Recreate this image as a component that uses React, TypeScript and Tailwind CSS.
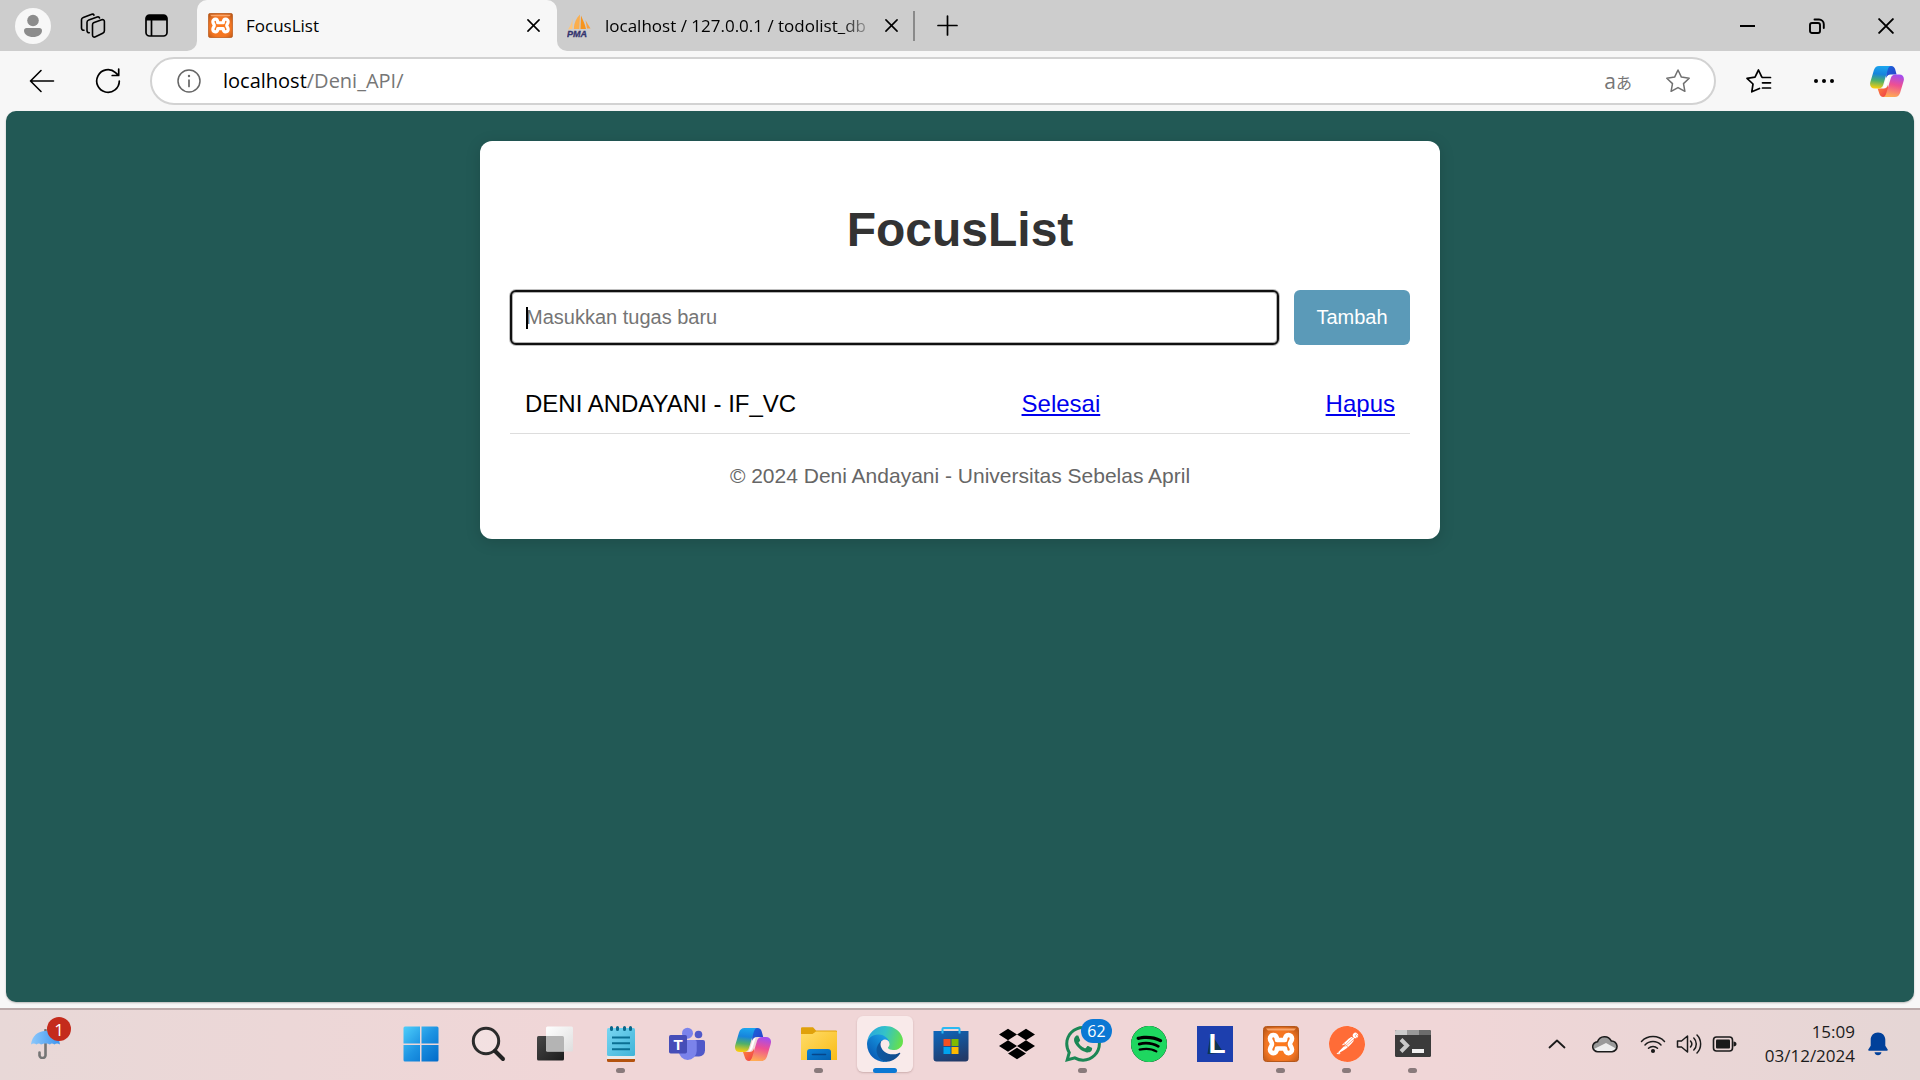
import React from "react";
import { SiSpotify, SiDropbox, SiPostman, SiWhatsapp } from "react-icons/si";

const iconLine = {
  fill: "none",
  stroke: "currentColor",
  strokeLinecap: "round" as const,
  strokeLinejoin: "round" as const,
};

function XamppIcon({ size }: { size: number }) {
  return (
    <svg width={size} height={size} viewBox="0 0 36 36" aria-hidden="true">
      <defs>
        <radialGradient id="xamppFill" cx="0.5" cy="0.55" r="0.65">
          <stop offset="0" stopColor="#ff7a1c" />
          <stop offset="0.65" stopColor="#f37623" />
          <stop offset="1" stopColor="#c05a18" />
        </radialGradient>
      </defs>
      <rect x="0.5" y="0.5" width="35" height="35" rx="3" fill="url(#xamppFill)" stroke="#b4581c" />
      <path d="M3 2.500h30l-2 2H5z" fill="#f9a56a" />
      <path
        d="M14 14C14 7 7 8 7 12.500C7 15 9 16 9 18C9 20 7 21 7 23.500C7 28 14 29 14 22.500H22C22 29 29 28 29 23.500C29 21 27 20 27 18C27 16 29 15 29 12.500C29 8 22 7 22 14Z"
        fill="none"
        stroke="#fff"
        strokeWidth="4.600"
        strokeLinecap="round"
        strokeLinejoin="round"
      />
    </svg>
  );
}

function CopilotIcon({ className }: { className: string }) {
  return (
    <svg className={className} viewBox="0 0 36 33" aria-hidden="true">
      <defs>
        <linearGradient id="cpA" x1="0.4" y1="0" x2="0.3" y2="1">
          <stop offset="0" stopColor="#1ba5ee" />
          <stop offset="0.35" stopColor="#1784dc" />
          <stop offset="0.65" stopColor="#4fb06a" />
          <stop offset="1" stopColor="#ffcf0a" />
        </linearGradient>
        <linearGradient id="cpB" x1="0.6" y1="0" x2="0.4" y2="1">
          <stop offset="0" stopColor="#a34df0" />
          <stop offset="0.45" stopColor="#ee4f93" />
          <stop offset="1" stopColor="#ffac53" />
        </linearGradient>
        <linearGradient id="cpC" x1="0" y1="0" x2="1" y2="1">
          <stop offset="0" stopColor="#1a66dc" />
          <stop offset="1" stopColor="#2a3fc8" />
        </linearGradient>
        <linearGradient id="cpD" x1="0" y1="0" x2="1" y2="1">
          <stop offset="0" stopColor="#ff8a3a" />
          <stop offset="1" stopColor="#ee3b4a" />
        </linearGradient>
      </defs>
      <path d="M17 0h5.500c2.300 0 3.600 1.400 4.200 3.500L28.200 9H22c-2.500 0-4 1.500-4.800 4z" fill="url(#cpC)" />
      <path d="M8 24h6.500c2.500 0 4-1.500 4.600-4L19 33h-5c-2.300 0-3.500-1.500-4.100-3.500z" fill="url(#cpD)" />
      <path d="M9.500 0H22.500c-2 0-3 1.500-3.800 4.200L14 20c-.9 2.800-2.400 4-5 4H5c-4 0-5.800-3-4.700-7L4 4.500C5 1.500 6.700 0 9.500 0z" fill="url(#cpA)" />
      <path d="M26.500 33H13.500c2 0 3-1.500 3.800-4.200L22 13c.9-2.800 2.400-4 5-4h4c4 0 5.800 3 4.700 7L32 28.500c-1 3-2.700 4.500-5.500 4.500z" fill="url(#cpB)" />
      <path d="M20.800 9.500c-2 .6-3 2-3.600 3.800L15 20.500c-.4 1.400-1 2.400-1.800 3.100 2.500-.2 3.800-1.600 4.500-4z" fill="#fff" />
    </svg>
  );
}

function PmaIcon() {
  return (
    <svg width="24" height="24" viewBox="0 0 24 24" aria-hidden="true">
      <path d="M1 15.500C3.500 12 5 8 5.500 4L5.500 15z" fill="#fcc67e" />
      <path d="M6.800 15C7 9 9 4.500 13 0.500L12.300 15z" fill="#fbae4c" />
      <path d="M14 1.500c1.500 4 4 8 5 13.500h-5.500z" fill="#f7941d" />
      <path d="M18.500 6c1.500 3 3.500 6 5 8.500h-3.500z" fill="#f9a03f" />
      <text x="0" y="23" fontFamily="Liberation Sans, Arial, sans-serif" fontSize="9" fontWeight="700" fontStyle="italic" fill="#34346e" stroke="#34346e" strokeWidth="0.3">
        PMA
      </text>
    </svg>
  );
}

function CloseGlyph({ size }: { size: number }) {
  return (
    <svg width={size} height={size} viewBox="0 0 14 14" aria-hidden="true" {...iconLine} strokeWidth="1.700">
      <path d="M1 1l12 12M13 1L1 13" />
    </svg>
  );
}

function TitleBar() {
  return (
    <header className="flex h-[51px] bg-[#f7f7f7] text-black">
      <div className="flex w-[197px] shrink-0 items-center rounded-br-[10px] bg-[#cdcdcd] pl-[15px]">
        <button type="button" aria-label="Profile" className="flex size-9 items-center justify-center rounded-full bg-[#f7f7f7]">
          <svg width="20" height="24" viewBox="0 0 20 24" fill="#8c8c8c" aria-hidden="true">
            <circle cx="10" cy="6.500" r="5.800" />
            <path d="M3.500 14h13c1.300 0 2.500 1 2.500 2.500 0 4-4 6.500-9 6.500s-9-2.500-9-6.500C1 15 2.200 14 3.500 14z" />
          </svg>
        </button>
        <button type="button" aria-label="Workspaces" className="ml-[29px]">
          <svg width="26" height="26" viewBox="0 0 26 26" aria-hidden="true" {...iconLine} strokeWidth="1.600">
            <path d="M13.500 9.800l8.200-3c1.500-.5 2.700.2 2.700 1.800v9.200c0 1.200-.6 2-1.700 2.500l-7.200 3.500c-1.700.8-3-.1-3-1.700V12c0-1.100.3-1.800 1-2.200z" />
            <path d="M19.500 4.900c-.3-1-1.200-1.300-2.300-.9L8.800 7C7.700 7.400 7 8.200 7 9.300v8.200c0 1.500.9 2.300 2.300 2.300" />
            <path d="M14 2.100c-.4-.9-1.200-1.200-2.200-.8L3.300 4.500C2.200 4.900 1.500 5.700 1.500 6.800V15c0 1.500 1 2.300 2.500 2.300" />
          </svg>
        </button>
        <button type="button" aria-label="Tab actions" className="ml-[39px]">
          <svg width="23" height="23" viewBox="0 0 23 23" aria-hidden="true">
            <rect x="1" y="1" width="21" height="21" rx="3.500" fill="none" stroke="#000" strokeWidth="1.700" />
            <path d="M1 6.500V4.500A3.500 3.500 0 0 1 4.500 1h14A3.500 3.500 0 0 1 22 4.500v2z" fill="#000" />
            <path d="M6.500 6v16" stroke="#000" strokeWidth="1.700" />
          </svg>
        </button>
      </div>

      <div className="w-[360px] shrink-0 bg-[#cdcdcd]">
        <div className="flex h-full items-center rounded-t-[10px] bg-[#f7f7f7] pr-[17px] pl-[11px]">
          <XamppIcon size={25} />
          <span className="ml-[13px] flex-1 text-[17px]">FocusList</span>
          <button type="button" aria-label="Close tab">
            <CloseGlyph size={13} />
          </button>
        </div>
      </div>

      <div className="flex min-w-0 flex-1 items-center rounded-bl-[10px] bg-[#cdcdcd] pl-2.5">
        <PmaIcon />
        <span className="ml-3.5 w-[264px] overflow-hidden text-[17px] whitespace-nowrap [mask-image:linear-gradient(to_right,#000_236px,transparent_270px)]">
          localhost / 127.0.0.1 / todolist_db
        </span>
        <button type="button" aria-label="Close tab" className="ml-4">
          <CloseGlyph size={13} />
        </button>
        <span className="ml-[15px] h-[30px] w-0.5 bg-[#8a8a8a]" />
        <button type="button" aria-label="New tab" className="ml-[22px]">
          <svg width="21" height="21" viewBox="0 0 21 21" aria-hidden="true" {...iconLine} strokeWidth="1.700">
            <path d="M10.500 1v19M1 10.500h19" />
          </svg>
        </button>
        <div className="ml-auto flex">
          <button type="button" aria-label="Minimize" className="flex h-12 w-[69px] items-center justify-center">
            <span className="h-0.5 w-[15px] bg-black" />
          </button>
          <button type="button" aria-label="Restore" className="flex h-12 w-[69px] items-center justify-center">
            <svg width="16" height="16" viewBox="0 0 16 16" aria-hidden="true" {...iconLine} strokeWidth="1.900">
              <rect x="1" y="5" width="10" height="10" rx="2" />
              <path d="M5.500 1.500H10a4.800 4.800 0 0 1 4.800 4.800V10" />
            </svg>
          </button>
          <button type="button" aria-label="Close" className="flex h-12 w-[69px] items-center justify-center">
            <CloseGlyph size={16} />
          </button>
        </div>
      </div>
    </header>
  );
}

function Toolbar() {
  return (
    <nav className="flex h-[60px] items-center bg-[#f7f7f7] pr-4 pl-7 text-black" aria-label="Browser toolbar">
      <button type="button" aria-label="Back">
        <svg width="28" height="26" viewBox="0 0 28 26" aria-hidden="true" {...iconLine} strokeWidth="1.600">
          <path d="M25.500 13H2.500M13 2.500L2.500 13 13 23.500" />
        </svg>
      </button>
      <button type="button" aria-label="Refresh" className="ml-[39px]">
        <svg width="26" height="26" viewBox="0 0 26 26" aria-hidden="true" {...iconLine} strokeWidth="1.700">
          <path d="M24.300 13A11.300 11.300 0 1 1 20.500 4.600L23.500 7.300M23.700 1v6.500h-6.500" />
        </svg>
      </button>
      <div className="ml-[29px] flex h-12 min-w-0 flex-1 items-center rounded-full border-2 border-[#d2d2d2] bg-white pr-[23px] pl-6">
        <svg width="26" height="26" viewBox="0 0 26 26" aria-hidden="true" {...iconLine} stroke="#666" strokeWidth="1.500">
          <circle cx="13" cy="13" r="11" />
          <path d="M13 12v6.500" strokeWidth="1.700" />
          <circle cx="13" cy="8" r="0.500" strokeWidth="1.400" />
        </svg>
        <div className="ml-[21px] flex-1 text-xl text-[#767676]">
          <span className="text-black">localhost</span>/Deni_API/
        </div>
        <button type="button" aria-label="Translate page" className="flex items-baseline text-[#767676]">
          <span className="text-[21px] leading-6">a</span>
          <span className="font-['Noto_Sans_CJK_JP',sans-serif] text-base leading-6">あ</span>
        </button>
        <button type="button" aria-label="Add to favorites" className="ml-[33px] text-[#707070]">
          <svg width="26" height="26" viewBox="0 0 26 26" aria-hidden="true" {...iconLine} strokeWidth="1.500">
            <path d="M13 2l3.400 7.100 7.800 1.100-5.700 5.400 1.400 7.700L13 19.600l-6.900 3.700 1.400-7.700-5.700-5.400 7.800-1.100z" />
          </svg>
        </button>
      </div>
      <button type="button" aria-label="Favorites" className="ml-[29px]">
        <svg width="27" height="26" viewBox="0 0 27 26" aria-hidden="true" {...iconLine} strokeWidth="1.700">
          <path d="M14.500 20.500L6.800 23.800 8 16 2 10.300l8-1.200L13.500 2l3.200 6.800M17.500 9.500H25.500M17.500 14.800H25.500M17.500 20H25.500" />
        </svg>
      </button>
      <button type="button" aria-label="Settings and more" className="ml-[41px]">
        <svg width="22" height="6" viewBox="0 0 22 6" aria-hidden="true">
          <circle cx="3" cy="3" r="2" />
          <circle cx="11" cy="3" r="2" />
          <circle cx="19" cy="3" r="2" />
        </svg>
      </button>
      <button type="button" aria-label="Copilot" className="ml-[35px]">
        <CopilotIcon className="h-[31px] w-[34px]" />
      </button>
    </nav>
  );
}

function TodoCard() {
  return (
    <section className="mx-auto w-full max-w-[960px] rounded-xl bg-white p-[30px] font-['Liberation_Sans',Arial,sans-serif] shadow-[0_3px_15px_rgba(0,0,0,0.15)]">
      <h1 className="mt-8 mb-[34px] text-center text-[48px] leading-[53px] font-bold text-[#333]">FocusList</h1>
      <form className="flex gap-[15px]" onSubmit={(e) => e.preventDefault()}>
        <div className="relative min-w-0 flex-1">
          <input
            type="text"
            aria-label="Tugas baru"
            placeholder="Masukkan tugas baru"
            className="h-[55px] w-full rounded-md border-2 border-[#101010] bg-white px-3.5 text-xl text-black shadow-[0_0_0_1px_rgba(0,0,0,0.25),inset_0_0_0_1px_rgba(0,0,0,0.3)] outline-none placeholder:text-[#757575]"
          />
          <span className="absolute top-[17px] left-4 h-[22px] w-0.5 bg-black" />
        </div>
        <button type="submit" className="h-[55px] w-[116px] rounded-md bg-[#5b9ab8] pb-0.5 text-xl text-white">
          Tambah
        </button>
      </form>
      <ul className="mt-[30px]">
        <li className="flex justify-between border-b border-[#ddd] p-[15px] text-2xl leading-7 text-black">
          <span>DENI ANDAYANI - IF_VC</span>
          <a href="#selesai" className="text-[#0000ee] underline">
            Selesai
          </a>
          <a href="#hapus" className="text-[#0000ee] underline">
            Hapus
          </a>
        </li>
      </ul>
      <footer className="mt-[30px] mb-[21px] text-center text-[21px] leading-6 text-[#666]">
        © 2024 Deni Andayani - Universitas Sebelas April
      </footer>
    </section>
  );
}

function WindowsIcon() {
  return (
    <svg width="36" height="36" viewBox="0 0 36 36" aria-hidden="true">
      <defs>
        <linearGradient id="winFill" gradientUnits="userSpaceOnUse" x1="0" y1="0" x2="36" y2="36">
          <stop offset="0" stopColor="#4fd0fb" />
          <stop offset="0.500" stopColor="#1d93e2" />
          <stop offset="1" stopColor="#0069c8" />
        </linearGradient>
      </defs>
      <path d="M2 .5h15v17H.5V2A1.500 1.500 0 0 1 2 .5zM18.500.5H34A1.500 1.500 0 0 1 35.500 2v15.500h-17zM.5 19H17v16.500H2A1.500 1.500 0 0 1 .5 34zM18.500 19h17v15a1.500 1.500 0 0 1-1.500 1.500H18.500z" fill="url(#winFill)" />
    </svg>
  );
}

function SearchIcon() {
  return (
    <svg width="36" height="36" viewBox="0 0 36 36" aria-hidden="true">
      <circle cx="15" cy="15" r="12.700" fill="rgba(255,255,255,0.25)" stroke="#2b2b2b" strokeWidth="3" />
      <path d="M24 25l8 8" stroke="#222" strokeWidth="4" strokeLinecap="round" />
    </svg>
  );
}

function TaskViewIcon() {
  return (
    <svg width="36" height="36" viewBox="0 0 36 36" aria-hidden="true">
      <defs>
        <linearGradient id="tvDark" x1="0" y1="0" x2="1" y2="1">
          <stop offset="0" stopColor="#474747" />
          <stop offset="1" stopColor="#1c1c1c" />
        </linearGradient>
        <linearGradient id="tvLight" x1="0" y1="0" x2="1" y2="1">
          <stop offset="0" stopColor="#fff" />
          <stop offset="1" stopColor="#dedede" />
        </linearGradient>
      </defs>
      <rect x="0" y="10" width="27" height="24.500" rx="1.500" fill="url(#tvDark)" />
      <rect x="9" y="0.500" width="27" height="25" rx="1.500" fill="url(#tvLight)" />
      <path d="M9 10h16.500a1.500 1.500 0 0 1 1.500 1.500v14H10.500A1.500 1.500 0 0 1 9 24z" fill="#b4b4b4" />
    </svg>
  );
}

function NotepadIcon() {
  return (
    <svg width="36" height="36" viewBox="0 0 36 36" aria-hidden="true">
      <defs>
        <linearGradient id="npFill" x1="0" y1="0" x2="1" y2="1">
          <stop offset="0" stopColor="#79d6f2" />
          <stop offset="1" stopColor="#3fb4d8" />
        </linearGradient>
      </defs>
      <rect x="4" y="28" width="28" height="8" rx="1.500" fill="#b4530f" />
      <rect x="4" y="27" width="28" height="6" fill="#e9e9e9" />
      <rect x="4" y="2" width="28" height="28" rx="1.500" fill="url(#npFill)" />
      <path d="M9 11.500h18M9 17.300h18M9 23.200h18" stroke="#0a6f93" strokeWidth="2" />
      <path d="M8.500 1.500v2M14.500 1.500v2M21.500 1.500v2M27.500 1.500v2" stroke="#0a6789" strokeWidth="3" strokeLinecap="round" />
    </svg>
  );
}

function TeamsIcon() {
  return (
    <svg width="36" height="36" viewBox="0 0 36 36" aria-hidden="true">
      <circle cx="29.500" cy="8.500" r="3.800" fill="#5059c9" />
      <path d="M23 14h11a2 2 0 0 1 2 2v8.500a6 6 0 0 1-6 6h-7z" fill="#5059c9" />
      <circle cx="18.500" cy="7.200" r="5.500" fill="#7b83eb" />
      <path d="M10 14h16a1.700 1.700 0 0 1 1.700 1.700V25a9 9 0 0 1-9 9 9 9 0 0 1-9-9z" fill="#7b83eb" />
      <rect x="0" y="9" width="18" height="18.500" rx="1.700" fill="#464eb8" />
      <text x="9" y="24" textAnchor="middle" fontFamily="Liberation Sans, Arial, sans-serif" fontSize="15" fontWeight="700" fill="#fff">
        T
      </text>
    </svg>
  );
}

function FolderIcon() {
  return (
    <svg width="36" height="36" viewBox="0 0 36 36" aria-hidden="true">
      <defs>
        <linearGradient id="fdFill" x1="0" y1="0" x2="1" y2="1">
          <stop offset="0" stopColor="#ffdc6a" />
          <stop offset="1" stopColor="#f9bc16" />
        </linearGradient>
        <linearGradient id="fdClip" x1="0" y1="0" x2="1" y2="1">
          <stop offset="0" stopColor="#0c83da" />
          <stop offset="1" stopColor="#0560ae" />
        </linearGradient>
      </defs>
      <path d="M0 2.500A1.200 1.200 0 0 1 1.200 1.300H12l3 3.200h20A1 1 0 0 1 36 5.500V10H0z" fill="#e0a10b" />
      <path d="M0 8h11.500L15 5.500h20a1 1 0 0 1 1 1V34H0z" fill="url(#fdFill)" />
      <path d="M6 34V26a3 3 0 0 1 3-3h18a3 3 0 0 1 3 3v8z" fill="url(#fdClip)" />
      <path d="M11.500 28.500h13" stroke="#06468a" strokeWidth="1.600" strokeLinecap="round" />
    </svg>
  );
}

function EdgeIcon() {
  return (
    <svg width="36" height="36" viewBox="0 0 256 256" aria-hidden="true">
      <defs>
        <linearGradient id="edA" x1="63" y1="177" x2="241" y2="177" gradientUnits="userSpaceOnUse">
          <stop offset="0" stopColor="#0c59a4" />
          <stop offset="1" stopColor="#114a8b" />
        </linearGradient>
        <linearGradient id="edB" x1="157" y1="101" x2="46" y2="222" gradientUnits="userSpaceOnUse">
          <stop offset="0" stopColor="#1b9de2" />
          <stop offset="0.400" stopColor="#1284d2" />
          <stop offset="1" stopColor="#0a5fb8" />
        </linearGradient>
        <linearGradient id="edC" x1="20" y1="60" x2="245" y2="130" gradientUnits="userSpaceOnUse">
          <stop offset="0" stopColor="#2aa9dc" />
          <stop offset="0.450" stopColor="#34c2c8" />
          <stop offset="1" stopColor="#66e04c" />
        </linearGradient>
      </defs>
      <g transform="translate(-4.630 -4.920)">
        <path d="M235.680 195.460a93.730 93.730 0 0 1-10.540 4.710 101.870 101.870 0 0 1-35.900 6.460c-47.320 0-88.540-32.550-88.540-74.320A31.480 31.480 0 0 1 117.130 105c-42.800 1.800-53.800 46.400-53.800 72.530 0 73.880 68.090 81.370 82.760 81.370 7.910 0 19.840-2.300 27-4.560l1.310-.44a128.340 128.340 0 0 0 66.600-52.800 4 4 0 0 0-5.320-5.640z" fill="url(#edA)" />
        <path d="M110.340 246.340A79.200 79.200 0 0 1 87.600 225a80.720 80.720 0 0 1 29.530-120c3.120-1.470 8.450-4.130 15.540-4a32.350 32.350 0 0 1 25.690 13 31.880 31.880 0 0 1 6.360 18.660c0-.21 24.460-79.600-80-79.600-43.900 0-80 41.660-80 78.210a130.150 130.150 0 0 0 12.110 56 128 128 0 0 0 156.380 67.110 75.550 75.550 0 0 1-62.780-8z" fill="url(#edB)" />
        <path d="M156.940 153.780c-.81 1.050-3.300 2.500-3.300 5.660 0 2.610 1.700 5.120 4.720 7.230 14.380 10 41.490 8.680 41.560 8.680a59.560 59.560 0 0 0 30.270-8.350 61.380 61.380 0 0 0 30.430-52.880c.26-22.410-8-37.310-11.340-43.910C228.090 28.760 182.350 5 132.610 5a128 128 0 0 0-128 126.200c.48-36.540 36.800-66.050 80-66.050 3.500 0 23.460.34 42 10.070 16.340 8.580 24.900 18.940 30.850 29.210 6.180 10.670 7.280 24.150 7.280 29.520s-2.740 13.330-7.800 19.830z" fill="url(#edC)" />
      </g>
    </svg>
  );
}

function StoreIcon() {
  return (
    <svg width="36" height="36" viewBox="0 0 36 36" aria-hidden="true">
      <defs>
        <linearGradient id="stFill" x1="0.200" y1="0" x2="0.600" y2="1">
          <stop offset="0" stopColor="#0f65b8" />
          <stop offset="1" stopColor="#233a68" />
        </linearGradient>
      </defs>
      <path d="M.5 5h35v27.500a3 3 0 0 1-3 3h-29a3 3 0 0 1-3-3z" fill="url(#stFill)" />
      <path d="M9.500 7.500V3a1 1 0 0 1 1-1h15a1 1 0 0 1 1 1v4.500" fill="none" stroke="#2bb9f2" strokeWidth="2" />
      <path d="M10.500 13h7v7h-7z" fill="#f25022" />
      <path d="M18.500 13h7v7h-7z" fill="#7fba00" />
      <path d="M10.500 21h7v7h-7z" fill="#00a4ef" />
      <path d="M18.500 21h7v7h-7z" fill="#ffb900" />
    </svg>
  );
}

function LetterIcon() {
  return (
    <svg width="36" height="36" viewBox="0 0 36 36" aria-hidden="true">
      <path d="M0 0h36v36H0z" fill="#1d3fae" />
      <path d="M13.500 7l-3 21h3l13-1.500z" fill="#0e3550" />
      <text x="11.500" y="26.500" fontFamily="Liberation Sans, Arial, sans-serif" fontSize="28" fontWeight="700" fill="#fff">
        L
      </text>
    </svg>
  );
}

function TerminalIcon() {
  return (
    <svg width="36" height="36" viewBox="0 0 36 36" aria-hidden="true">
      <rect x="0" y="4" width="36" height="27" rx="1.500" fill="#3b3b3b" />
      <path d="M1.500 4H12v5H0V5.500A1.500 1.500 0 0 1 1.500 4z" fill="#cbcbcb" />
      <path d="M12 4h12v5H12z" fill="#999" />
      <path d="M24 4h10.500A1.500 1.500 0 0 1 36 5.500V9H24z" fill="#6c6c6c" />
      <path d="M6 13.500l6 6-6 6" fill="none" stroke="#c9c9c9" strokeWidth="4" />
      <path d="M17 23h12v4H17z" fill="#f1f1f1" />
    </svg>
  );
}

type TaskItem = { name: string; icon: React.ReactNode; open?: boolean; active?: boolean; badge?: string };

const tasks: TaskItem[] = [
  { name: "Search", icon: <SearchIcon /> },
  { name: "Task view", icon: <TaskViewIcon /> },
  { name: "Notepad", icon: <NotepadIcon />, open: true },
  { name: "Teams", icon: <TeamsIcon /> },
  { name: "Copilot", icon: <CopilotIcon className="h-[33px] w-9" /> },
  { name: "File Explorer", icon: <FolderIcon />, open: true },
  { name: "Edge", icon: <EdgeIcon />, active: true },
  { name: "Store", icon: <StoreIcon /> },
  { name: "Dropbox", icon: <SiDropbox size={36} color="#000" /> },
  { name: "WhatsApp", icon: <SiWhatsapp size={36} color="#1b8755" />, open: true, badge: "62" },
  {
    name: "Spotify",
    icon: (
      <span className="rounded-full bg-black">
        <SiSpotify size={36} color="#1ed760" />
      </span>
    ),
  },
  { name: "L", icon: <LetterIcon /> },
  { name: "XAMPP", icon: <XamppIcon size={36} />, open: true },
  {
    name: "Postman",
    icon: (
      <span className="rounded-full bg-white">
        <SiPostman size={36} color="#ff6c37" />
      </span>
    ),
    open: true,
  },
  { name: "Terminal", icon: <TerminalIcon />, open: true },
];

function TaskButton({ item }: { item: TaskItem }) {
  return (
    <button
      type="button"
      aria-label={item.name}
      className={
        item.active
          ? "relative flex size-14 items-center justify-center rounded-md bg-[#f9eaea] shadow-[0_1px_2px_rgba(120,80,80,0.3)]"
          : "relative flex size-14 items-center justify-center"
      }
    >
      {item.icon}
      {item.open && <span className="absolute -bottom-px left-[23px] h-[5px] w-[9px] rounded-full bg-[#897a7b]" />}
      {item.active && <span className="absolute -bottom-px left-4 h-[5px] w-6 rounded-full bg-[#0b78d4]" />}
      {item.badge && (
        <span className="absolute top-[3px] left-[26px] flex h-6 w-[31px] items-center justify-center rounded-full bg-[#0b78d4] text-[16px] leading-none text-white">
          {item.badge}
        </span>
      )}
    </button>
  );
}

function Taskbar() {
  return (
    <footer className="flex h-[72px] shrink-0 items-center border-t-2 border-[#bbaaaa] bg-[linear-gradient(to_right,#e8d8d7,#f0d6d7_30%,#f0d6d7_75%,#e5d6d5)] pb-0.5 text-[#1b1b1b]">
      <div className="w-[393px] shrink-0 pl-[30px]">
        <button type="button" aria-label="Weather" className="relative block">
          <svg width="32" height="30" viewBox="0 0 32 30" aria-hidden="true">
            <defs>
              <linearGradient id="umFill" x1="0" y1="0" x2="1" y2="0">
                <stop offset="0" stopColor="#8cc8fb" />
                <stop offset="1" stopColor="#3d94ee" />
              </linearGradient>
            </defs>
            <path d="M15.500 1v24.500a3 3 0 0 1-6 1v-3" fill="none" stroke="#757575" strokeWidth="2.600" strokeLinecap="round" />
            <path d="M1 15.500C2 7 8 2 15.500 2S29 7 30 15.500c-2-1.500-4-1.500-5.500 0-2-1.500-3.500-1.500-4.500 0-2-1.500-6.500-1.500-9 0-1.500-1.500-3-1.500-4.500 0-2-1.500-3.500-1.500-5.500 0z" fill="url(#umFill)" />
          </svg>
          <span className="absolute -top-3 left-[17px] flex size-6 items-center justify-center rounded-full bg-[#c42b1c] text-[17px] leading-none text-white">
            1
          </span>
        </button>
      </div>
      <button type="button" aria-label="Start" className="mr-3 flex size-14 items-center justify-center">
        <WindowsIcon />
      </button>
      <div className="flex gap-2.5">
        {tasks.map((item) => (
          <TaskButton key={item.name} item={item} />
        ))}
      </div>
      <div className="ml-auto flex items-center pr-8">
        <button type="button" aria-label="Show hidden icons">
          <svg width="18" height="10" viewBox="0 0 18 10" aria-hidden="true" {...iconLine} strokeWidth="1.800">
            <path d="M1.500 8.500L9 1.500l7.500 7" />
          </svg>
        </button>
        <button type="button" aria-label="OneDrive" className="ml-[26px]">
          <svg width="26" height="18" viewBox="0 0 26 18" aria-hidden="true">
            <path d="M6 16.500a5 5 0 0 1-.5-9.900A7.500 7.500 0 0 1 19.300 6 5.300 5.300 0 0 1 20 16.500z" fill="#9a9a9a" />
            <path d="M2 14l12-6 10 5.500c-1 2-2.500 3-4 3H6c-2 0-3.300-1-4-2.500z" fill="#ededed" />
            <path d="M6 16.700a5 5 0 0 1-.5-10A7.500 7.500 0 0 1 19.300 6 5.300 5.300 0 0 1 20 16.700z" fill="none" stroke="#1b1b1b" strokeWidth="1.600" />
          </svg>
        </button>
        <button type="button" aria-label="Network, sound and battery" className="ml-[22px] flex items-center gap-2.5">
          <svg width="26" height="20" viewBox="0 0 26 20" aria-hidden="true" {...iconLine} strokeWidth="1.500">
            <path d="M1.500 7.500a16 16 0 0 1 23 0M5 11a11 11 0 0 1 16 0M8.500 14.300a6.300 6.300 0 0 1 9 0" />
            <circle cx="13" cy="17" r="1.300" fill="currentColor" />
          </svg>
          <svg width="26" height="22" viewBox="0 0 26 22" aria-hidden="true" {...iconLine} strokeWidth="1.500">
            <path d="M1.500 8v6h4l6 5V3l-6 5zM14.500 8a4.500 4.500 0 0 1 0 6M17.800 5a8.500 8.500 0 0 1 0 12M21 2a13 13 0 0 1 0 18" />
          </svg>
          <svg width="26" height="16" viewBox="0 0 26 16" aria-hidden="true">
            <rect x="1.500" y="1" width="19" height="14" rx="3" fill="none" stroke="#1b1b1b" strokeWidth="1.600" />
            <rect x="4" y="3.500" width="14" height="9" rx="1" fill="#1b1b1b" />
            <path d="M21.500 5.500c1.800 0 3 1 3 2.500s-1.200 2.500-3 2.500z" fill="#1b1b1b" />
          </svg>
        </button>
        <div className="ml-[27px] text-right text-[17px] leading-6">
          <div>15:09</div>
          <div>03/12/2024</div>
        </div>
        <button type="button" aria-label="Notifications" className="ml-[13px]">
          <svg width="20" height="24" viewBox="0 0 20 24" fill="#00409a" aria-hidden="true">
            <path d="M10 .5c4.300 0 7.300 3.200 7.300 7.300v6l2.400 3.700c.3.600 0 1.200-.7 1.200H1c-.7 0-1-.6-.7-1.200l2.400-3.700v-6C2.700 3.700 5.700.5 10 .5zM6.500 20.300h7c-.4 1.800-1.700 3-3.500 3s-3.100-1.200-3.500-3z" />
          </svg>
        </button>
      </div>
    </footer>
  );
}

export default function App() {
  return (
    <div className="flex min-h-screen flex-col bg-[#f7f7f7] font-['Open_Sans','Noto_Sans',sans-serif]">
      <TitleBar />
      <Toolbar />
      <main className="mx-1.5 mb-1.5 flex-1 rounded-[10px] bg-[#225955] pt-[30px] shadow-[0_1px_2px_rgba(0,0,0,0.25)]">
        <TodoCard />
      </main>
      <Taskbar />
    </div>
  );
}
